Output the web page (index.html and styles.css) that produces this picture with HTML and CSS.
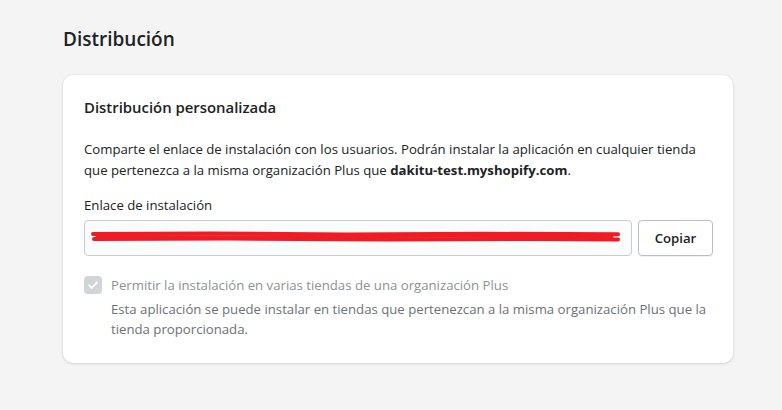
FILE: index.html
```html
<!DOCTYPE html>
<html lang="es">
<head>
<meta charset="utf-8">
<title>Distribución</title>
<link rel="stylesheet" href="styles.css">
</head>
<body>
<main class="page">
  <h1 class="page-title">Distribución</h1>
  <section class="card">
    <h2 class="card-title">Distribución personalizada</h2>
    <p class="intro">Comparte el enlace de instalación con los usuarios. Podrán instalar la aplicación en cualquier tienda que pertenezca a la misma organización Plus que <strong>dakitu-test.myshopify.com</strong>.</p>
    <label class="field-label">Enlace de instalación</label>
    <div class="field-row">
      <div class="input">
        <svg class="scribble" viewBox="0 0 540 14" preserveAspectRatio="none">
          <path d="M2 4 L120 3.5 L260 4.5 L400 3.8 L536 4.2" stroke="#ee1c25" stroke-width="4" fill="none" stroke-linecap="round"/>
          <path d="M3 9 L140 8.5 L300 9.6 L450 9 L536 9.4" stroke="#ee1c25" stroke-width="4" fill="none" stroke-linecap="round"/>
          <path d="M6 6.5 L200 6.8 L380 6.3 L530 6.7" stroke="#ee1c25" stroke-width="3" fill="none" stroke-linecap="round"/>
        </svg>
      </div>
      <button class="btn">Copiar</button>
    </div>
    <div class="check-row">
      <span class="checkbox">
        <svg viewBox="0 0 18 18" width="18" height="18"><path d="M5 9.2 L7.8 12 L13 6.3" stroke="#fff" stroke-width="1.8" fill="none" stroke-linecap="round" stroke-linejoin="round"/></svg>
      </span>
      <div class="check-text">
        <div class="check-label">Permitir la instalación en varias tiendas de una organización Plus</div>
        <div class="check-help">Esta aplicación se puede instalar en tiendas que pertenezcan a la misma organización Plus que la tienda proporcionada.</div>
      </div>
    </div>
  </section>
</main>
</body>
</html>
```

FILE: styles.css
```css
html, body {
  margin: 0;
  padding: 0;
  background: #f4f4f4;
}
body {
  font-family: "Open Sans", "Noto Sans", sans-serif;
  color: #202223;
}
.page {
  padding: 24px 49px 48px 63px;
}
.page-title {
  margin: 0 0 21px;
  font-size: 19px;
  font-weight: 600;
  line-height: 30px;
  color: #202223;
}
.card {
  background: #fff;
  border-radius: 10px;
  box-shadow: 0 0 0 1px rgba(63,63,68,0.03), 0 1px 3px rgba(63,63,68,0.15);
  padding: 21px 20px 24px 21px;
}
.card-title {
  margin: 0 0 21px;
  font-size: 14.9px;
  font-weight: 600;
  line-height: 22px;
}
.intro {
  margin: 0 0 14px;
  font-size: 13.2px;
  line-height: 21px;
}
.intro strong {
  font-weight: 700;
}
.field-label {
  display: block;
  font-size: 13.2px;
  line-height: 20px;
  margin-bottom: 5px;
}
.field-row {
  display: flex;
  gap: 6px;
}
.input {
  flex: 1;
  height: 34px;
  border: 1px solid #c9cccf;
  border-radius: 4px;
  background: #fafbfb;
  display: flex;
  align-items: center;
  padding: 0 9px 0 6px;
}
.scribble {
  width: 100%;
  height: 14px;
  margin-top: -2px;
}
.btn {
  width: 75px;
  height: 36px;
  border: 1px solid #babfc3;
  border-radius: 4px;
  background: #fff;
  font-family: inherit;
  font-size: 13.2px;
  font-weight: 600;
  color: #202223;
  box-shadow: 0 1px 0 rgba(0,0,0,0.05);
}
.check-row {
  display: flex;
  gap: 9px;
  margin-top: 19px;
}
.checkbox {
  flex: none;
  width: 18px;
  height: 18px;
  border-radius: 4px;
  background: #d2d5d8;
  margin-top: 1px;
}
.checkbox svg {
  display: block;
}
.check-text {
  flex: 1;
}
.check-label {
  font-size: 13.2px;
  line-height: 20px;
  color: #8c9196;
  margin-bottom: 4px;
}
.check-help {
  font-size: 13.2px;
  line-height: 20px;
  color: #6d7175;
}
```
